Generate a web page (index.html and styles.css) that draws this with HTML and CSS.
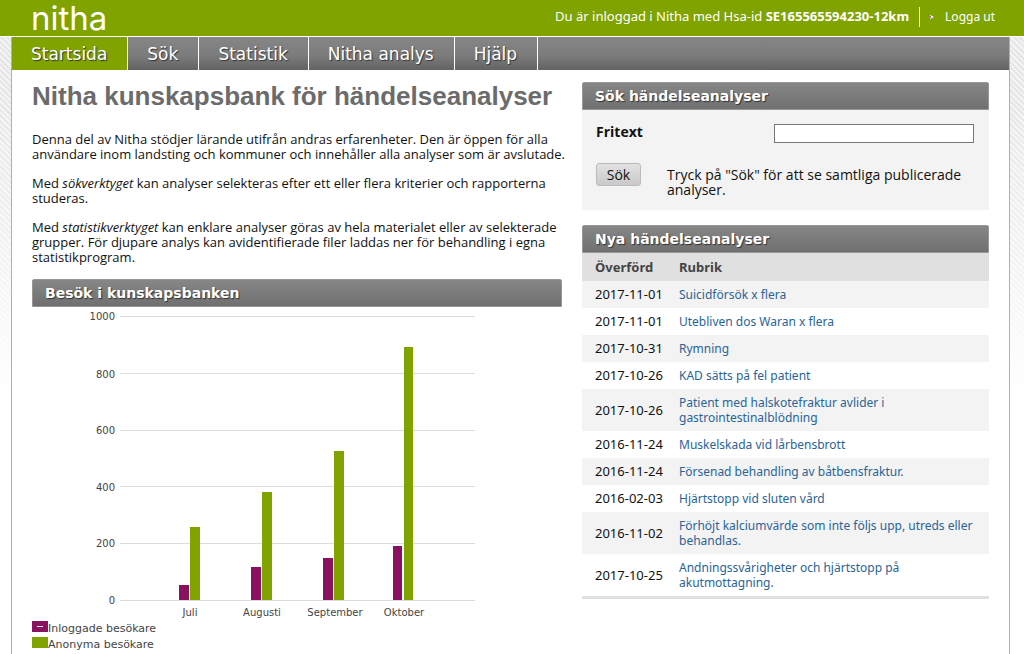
FILE: index.html
```html
<!DOCTYPE html>
<html lang="sv">
<head>
<meta charset="utf-8">
<title>Nitha kunskapsbank</title>
<link rel="stylesheet" href="styles.css">
</head>
<body>
<header class="top">
  <a class="logo" href="#">nitha</a>
  <div class="user">
    <span class="user-text">Du är inloggad i Nitha med Hsa-id <strong>SE165565594230-12km</strong></span>
    <a class="logout" href="#"><svg class="arrow" viewBox="0 0 4 6" aria-hidden="true"><path d="M0 1L4 3L0 5Z" fill="#fff"/><path d="M0 2h1v2H0z" fill="#b060a0"/></svg>Logga ut</a>
  </div>
</header>
<div class="page">
  <nav class="nav">
    <a class="tab active" href="#">Startsida</a>
    <a class="tab" href="#">Sök</a>
    <a class="tab" href="#">Statistik</a>
    <a class="tab" href="#">Nitha analys</a>
    <a class="tab" href="#">Hjälp</a>
  </nav>
  <main class="content">
    <section class="intro">
      <h1>Nitha kunskapsbank för händelseanalyser</h1>
      <p>Denna del av Nitha stödjer lärande utifrån andras erfarenheter. Den är öppen för alla användare inom landsting och kommuner och innehåller alla analyser som är avslutade.</p>
      <p>Med <em>sökverktyget</em> kan analyser selekteras efter ett eller flera kriterier och rapporterna studeras.</p>
      <p>Med <em>statistikverktyget</em> kan enklare analyser göras av hela materialet eller av selekterade grupper. För djupare analys kan avidentifierade filer laddas ner för behandling i egna statistikprogram.</p>
      <h2 class="bar">Besök i kunskapsbanken</h2>
      <svg class="chart" viewBox="0 0 444 314" role="img" aria-label="Besök per månad">
        <g class="grid">
          <path d="M88 9.5H443M88 66.5H443M88 123.5H443M88 179.5H443M88 236.5H443M88 293.5H443"/>
        </g>
        <g class="anon">
          <rect x="158" y="220" width="10" height="73"/>
          <rect x="230" y="185" width="10" height="108"/>
          <rect x="302" y="144" width="10" height="149"/>
          <rect x="372" y="40" width="9" height="253"/>
        </g>
        <g class="inlogged">
          <rect x="147" y="278" width="10" height="15"/>
          <rect x="219" y="260" width="10" height="33"/>
          <rect x="291" y="251" width="10" height="42"/>
          <rect x="361" y="239" width="9" height="54"/>
        </g>
        <g class="values">
          <text x="83" y="13">1000</text>
          <text x="83" y="71">800</text>
          <text x="83" y="127">600</text>
          <text x="83" y="184">400</text>
          <text x="83" y="240">200</text>
          <text x="83" y="297">0</text>
        </g>
        <g class="months">
          <text x="158" y="309">Juli</text>
          <text x="230" y="309">Augusti</text>
          <text x="303" y="309">September</text>
          <text x="372" y="309">Oktober</text>
        </g>
      </svg>
      <ul class="legend">
        <li><svg class="swatch" viewBox="0 0 16 11" aria-hidden="true"><path d="M0 0h16v11H0z" fill="#8a1060"/><path d="M5 5h6v1H5z" fill="#fff"/></svg>Inloggade besökare</li>
        <li><svg class="swatch" viewBox="0 0 16 11" aria-hidden="true"><path d="M0 0h16v11H0z" fill="#80a300"/></svg>Anonyma besökare</li>
      </ul>
    </section>
    <aside class="side">
      <section>
        <h2 class="bar">Sök händelseanalyser</h2>
        <form class="search">
          <div class="field">
            <label for="fritext">Fritext</label>
            <input id="fritext" type="text">
          </div>
          <div class="submit">
            <button type="button">Sök</button>
            <p>Tryck på "Sök" för att se samtliga publicerade analyser.</p>
          </div>
        </form>
      </section>
      <section>
        <h2 class="bar">Nya händelseanalyser</h2>
        <table class="news">
          <thead><tr><th class="date">Överförd</th><th>Rubrik</th></tr></thead>
          <tbody>
            <tr><td>2017-11-01</td><td><a href="#">Suicidförsök x flera</a></td></tr>
            <tr><td>2017-11-01</td><td><a href="#">Utebliven dos Waran x flera</a></td></tr>
            <tr><td>2017-10-31</td><td><a href="#">Rymning</a></td></tr>
            <tr><td>2017-10-26</td><td><a href="#">KAD sätts på fel patient</a></td></tr>
            <tr><td>2017-10-26</td><td><a href="#">Patient med halskotefraktur avlider i gastrointestinalblödning</a></td></tr>
            <tr><td>2016-11-24</td><td><a href="#">Muskelskada vid lårbensbrott</a></td></tr>
            <tr><td>2016-11-24</td><td><a href="#">Försenad behandling av båtbensfraktur.</a></td></tr>
            <tr><td>2016-02-03</td><td><a href="#">Hjärtstopp vid sluten vård</a></td></tr>
            <tr><td>2016-11-02</td><td><a href="#">Förhöjt kalciumvärde som inte följs upp, utreds eller behandlas.</a></td></tr>
            <tr><td>2017-10-25</td><td><a href="#">Andningssvårigheter och hjärtstopp på akutmottagning.</a></td></tr>
          </tbody>
        </table>
      </section>
    </aside>
  </main>
</div>
</body>
</html>
```
FILE: styles.css
```css
* { box-sizing: border-box; }

body {
  margin: 0;
  min-height: 100vh;
  display: flex;
  flex-direction: column;
  font: 13px/15px "Noto Sans", Verdana, sans-serif;
  color: #111;
  background:
    linear-gradient(to bottom, rgba(255, 255, 255, 0) 100px, #fff 400px),
    repeating-linear-gradient(45deg, #e6e6e6 0, #e6e6e6 2px, #f4f4f4 2px, #f4f4f4 4px);
}

a { text-decoration: none; }

.top {
  display: flex;
  justify-content: space-between;
  height: 37px;
  padding: 0 29px 0 31px;
  background: #80a300;
  border-bottom: 1px solid #fff;
  color: #fff;
}

.logo {
  font: 400 33px/36px Inter, sans-serif;
  color: #fff;
}

.user {
  display: flex;
  align-items: center;
  gap: 10px;
  padding-bottom: 3px;
}

.logout {
  display: flex;
  align-items: center;
  gap: 11px;
  height: 20px;
  padding-left: 10px;
  border-left: 1px solid #fff;
  color: #fff;
  font-size: 12px;
}

.arrow { width: 4px; height: 6px; }

.page {
  flex: 1;
  margin: 0 14px 0 11px;
  border: 1px solid #b0b0b0;
  border-width: 0 1px;
  background: #fff;
}

.nav {
  display: flex;
  height: 33px;
  background: linear-gradient(#868686, #7c7c7c 55%, #636363);
}

.tab {
  padding: 0 20px 0 19px;
  border-right: 1px solid #fff;
  color: #fff;
  font-family: "DejaVu Sans", Verdana, sans-serif;
  font-size: 17px;
  line-height: 34px;
  text-shadow: 1px 1px 1px #333;
}

.active { background: #80a300; }

.content {
  display: grid;
  grid-template-columns: 530fr 407fr;
  gap: 20px;
  padding: 12px 20px 0;
}

h1 {
  margin: 0 0 22px;
  font: bold 26px/28px "Liberation Sans", Arial, sans-serif;
  color: #6b6b6b;
}

p { margin: 0 0 14px; }

.intro p {
  margin-right: -8px;
  font-family: "Open Sans", "Noto Sans", sans-serif;
}

.bar {
  margin: 0;
  padding: 0 12px;
  border: 1px solid #979797;
  border-radius: 2px 2px 0 0;
  background: linear-gradient(#868686, #707070);
  color: #fff;
  font-family: "DejaVu Sans", Verdana, sans-serif;
  font-size: 14px;
  line-height: 26px;
  text-shadow: 1px 1px 1px #333;
}

.chart {
  display: block;
  width: 444px;
  max-width: 100%;
  font-family: "DejaVu Sans", Verdana, sans-serif;
  font-size: 10px;
}

.grid { stroke: #dcdcdc; fill: none; }
.anon { fill: #80a300; }
.inlogged { fill: #8a1060; }
.values { fill: #444; text-anchor: end; }
.months { fill: #444; text-anchor: middle; }

.legend {
  margin: 0;
  padding: 0;
  list-style: none;
  font-family: "DejaVu Sans", Verdana, sans-serif;
  font-size: 11px;
  line-height: 16px;
  color: #444;
}

.legend li { display: flex; }

.swatch { width: 16px; height: 11px; }

.side {
  display: flex;
  flex-direction: column;
  gap: 15px;
}

.search {
  padding: 14px 15px 13px 14px;
  background: #f3f3f3;
  font-family: "Open Sans", "Noto Sans", sans-serif;
  font-size: 14px;
}

.field {
  display: flex;
  justify-content: space-between;
  font-weight: bold;
}

.field input {
  width: 200px;
  height: 19px;
  border: 1px solid #777;
  background: #fff;
}

.submit {
  display: flex;
  align-items: flex-start;
  gap: 26px;
  padding-top: 20px;
}

.submit p {
  margin: 0;
  padding-top: 4px;
}

.submit button {
  width: 45px;
  height: 23px;
  flex: none;
  padding: 0;
  border: 1px solid #bbb;
  border-radius: 3px;
  background: linear-gradient(#e2e2e2, #c9c9c9);
  color: #111;
  font: inherit;
}

.news {
  width: 100%;
  border-collapse: collapse;
  border-bottom: 3px solid #e0e0e0;
}

.news th,
.news td {
  padding: 6px 2px 6px 13px;
  text-align: left;
}

.news th {
  padding-top: 7px;
  background: #e0e0e0;
  color: #444;
}

.date { width: 84px; }

.news tbody tr:nth-child(odd) { background: #f3f3f3; }

.news a {
  color: #2a6496;
  font-size: 12px;
}
```
